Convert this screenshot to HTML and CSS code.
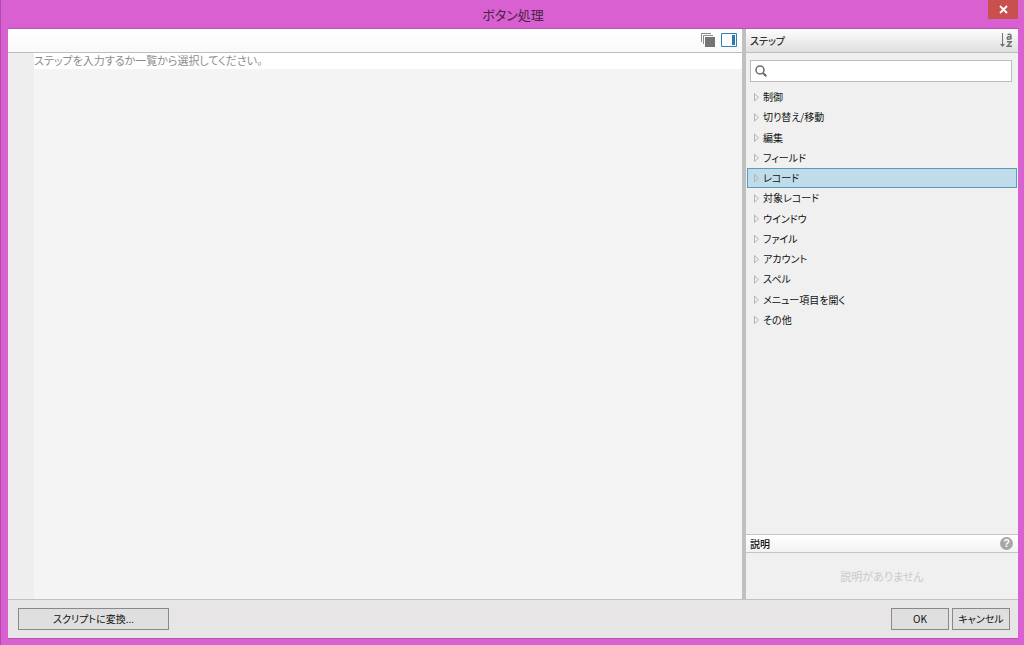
FILE: index.html
```html
<!DOCTYPE html>
<html lang="ja">
<head>
<meta charset="utf-8">
<title>ボタン処理</title>
<link rel="stylesheet" href="styles.css">
</head>
<body>
<div class="window">
  <header class="titlebar">
    <h1 class="title">ボタン処理</h1>
    <button class="close" type="button" aria-label="閉じる">
      <svg width="9" height="9" viewBox="0 0 9 9"><path d="M1 1l7 7M8 1l-7 7" stroke="#fff" stroke-width="1.8"/></svg>
    </button>
  </header>
  <div class="dialog">
    <div class="panes">
      <main class="editor">
        <div class="toolbar">
          <button class="tool" type="button" aria-label="コピー">
            <svg width="14" height="14" viewBox="0 0 14 14"><path d="M.5 9V.5H10M2.5 11V2.5H12" fill="none" stroke="#8a8a8a"/><path d="M4 4h10v10H4z" fill="#747474"/></svg>
          </button>
          <button class="tool" type="button" aria-label="ステップ一覧の表示">
            <svg width="16" height="14" viewBox="0 0 16 14"><path d="M.5.5h15v13H.5z" fill="#fff" stroke="#3480b2"/><path d="M11 2h3v10h-3z" fill="#2878b4"/></svg>
          </button>
        </div>
        <div class="script">
          <div class="gutter"></div>
          <div class="lines"><p class="line">ステップを入力するか一覧から選択してください。</p></div>
        </div>
      </main>
      <aside class="sidebar">
        <div class="side-head">
          <h2 class="side-title">ステップ</h2>
          <button class="tool" type="button" aria-label="並べ替え">
            <svg width="13" height="15" viewBox="0 0 13 15" fill="none" stroke="#707070"><path d="M2.5 0v13"/><path d="M0 11h5l-2.500 3z" fill="#707070" stroke="none"/><path d="M7.500 1.700q3.500-1.200 3.500 1v3.800M11 3.500q-3.800 0-3.800 1.500t1.800 1.200 2-1.200M7 8.700h4.200L7.300 13.300h4.700" stroke-width="1.400"/></svg>
          </button>
        </div>
        <label class="search">
          <svg width="12" height="12" viewBox="0 0 12 12" fill="none" stroke="#686868"><circle cx="5" cy="5" r="4" stroke-width="1.500"/><path d="M8 8l3.300 3.300" stroke-width="2"/></svg>
          <input class="search-input" type="search" aria-label="ステップを検索">
        </label>
        <ul class="steps">
          <li class="step">制御</li>
          <li class="step">切り替え/移動</li>
          <li class="step">編集</li>
          <li class="step">フィールド</li>
          <li class="step selected">レコード</li>
          <li class="step">対象レコード</li>
          <li class="step">ウインドウ</li>
          <li class="step">ファイル</li>
          <li class="step">アカウント</li>
          <li class="step">スペル</li>
          <li class="step">メニュー項目を開く</li>
          <li class="step">その他</li>
        </ul>
        <section class="info">
          <div class="info-head">
            <h2 class="info-title">説明</h2>
            <button class="help" type="button" aria-label="ヘルプ">?</button>
          </div>
          <p class="empty">説明がありません</p>
        </section>
      </aside>
    </div>
    <footer class="footer">
      <button class="btn convert" type="button">スクリプトに変換...</button>
      <button class="btn" type="button">OK</button>
      <button class="btn" type="button">キャンセル</button>
    </footer>
  </div>
</div>
</body>
</html>
```
FILE: styles.css
```css
* { box-sizing: border-box; }
body, h1, h2, p, ul { margin: 0; padding: 0; }
body, button, input {
  font-family: "Noto Sans CJK JP", sans-serif;
  font-feature-settings: "palt";
}
button { padding: 0; border: 0; background: none; color: inherit; }
svg { display: block; }

.window {
  display: flex;
  flex-direction: column;
  height: 100vh;
  padding: 0 6px 6px 7px;
  background: #d960d1;
  border-left: 1px solid #b04ba9;
  color: #111;
  font-size: 10px;
}
.titlebar {
  display: grid;
  grid-template-columns: 30px 1fr 30px;
  align-items: start;
  height: 28px;
}
.title {
  grid-column: 2;
  font-size: 13px;
  line-height: 29px;
  font-weight: 400;
  text-align: center;
  color: #4a2348;
}
.close {
  display: grid;
  place-items: center;
  height: 19px;
  background: #c8504f;
}
.dialog {
  flex: 1;
  min-height: 0;
  display: flex;
  flex-direction: column;
  border-top: 1px solid #b555ae;
  border-bottom: 1px solid #b555ae;
  background: #e7e5e6;
}
.panes { flex: 1; min-height: 0; display: flex; }
.editor { flex: 1; min-width: 0; display: flex; flex-direction: column; }
.toolbar {
  display: flex;
  justify-content: flex-end;
  align-items: center;
  gap: 6px;
  height: 24px;
  padding: 0 5px 2px;
  background: linear-gradient(#fff, #f9f9f9);
  border-bottom: 1px solid #bdbdbd;
}
.script { flex: 1; display: flex; background: #f4f4f4; }
.gutter { width: 26px; background: #eee; }
.lines { flex: 1; }
.line {
  height: 16px;
  line-height: 14px;
  background: #fff;
  color: #8c8c8c;
  font-size: 11px;
}
.sidebar {
  width: 276px;
  display: flex;
  flex-direction: column;
  border-left: 4px solid #c0c0c0;
  background: #f0f0f0;
}
.side-head {
  display: flex;
  justify-content: space-between;
  align-items: center;
  height: 24px;
  padding: 0 5px 0 4px;
  background: linear-gradient(#fdfdfd, #dfdfdf);
  border-bottom: 1px solid #bdbdbd;
}
.side-title { font-size: 10px; font-weight: 500; line-height: 22px; color: #333; }
.search {
  display: flex;
  align-items: center;
  gap: 4px;
  height: 22px;
  margin: 7px 6px 5px 4px;
  padding: 0 4px;
  background: #fff;
  border: 1px solid #bcbcbc;
}
.search-input {
  flex: 1;
  min-width: 0;
  padding: 0;
  border: 0;
  outline: 0;
  background: transparent;
  font-size: 11px;
}
.steps {
  display: grid;
  grid-auto-rows: 1fr;
  height: 243px;
  padding: 0 1px;
  list-style: none;
}
.step {
  display: flex;
  align-items: center;
  gap: 4px;
  padding-left: 6px;
  border: 1px solid transparent;
  line-height: 18px;
}
.step::before {
  content: "";
  width: 5px;
  height: 9px;
  background: #b4b4b4;
  clip-path: polygon(0 0, 100% 50%, 0 100%, 0 0, 1px 2px, 1px 7px, 4px 50%, 1px 2px);
}
.step.selected { background: #c0dcea; border-color: #529ebd; }
.info { margin-top: auto; }
.info-head {
  display: flex;
  justify-content: space-between;
  align-items: center;
  height: 19px;
  padding: 0 5px 0 4px;
  background: linear-gradient(#fff, #f2f2f2);
  border-top: 1px solid #c4c4c4;
  border-bottom: 1px solid #c4c4c4;
}
.info-title { font-size: 10px; font-weight: 500; line-height: 17px; }
.help {
  width: 13px;
  height: 13px;
  border-radius: 50%;
  background: #a6a6a6;
  color: #fff;
  font-family: "Liberation Sans", sans-serif;
  font-size: 11px;
  font-weight: 700;
  line-height: 13px;
}
.empty {
  height: 46px;
  line-height: 46px;
  text-align: center;
  font-size: 11px;
  color: #c9c9cf;
}
.footer {
  display: flex;
  gap: 3px;
  height: 39px;
  padding: 8px 8px 8px 10px;
  border-top: 1px solid #c2c0c1;
}
.btn {
  width: 58px;
  height: 22px;
  border: 1px solid #898989;
  background: #dfdfdf;
  font-size: 10px;
  line-height: 20px;
}
.convert { width: 151px; margin-right: auto; }
```
